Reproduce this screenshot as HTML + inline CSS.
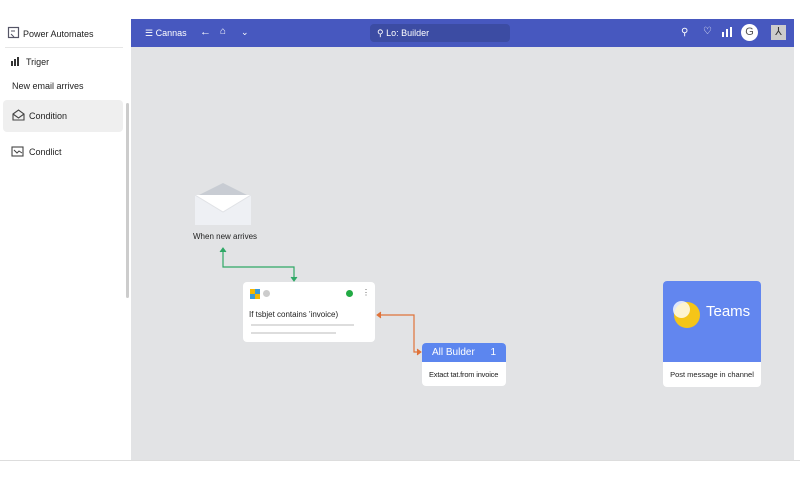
<!DOCTYPE html><html><head><style>
body{margin:0;width:800px;height:480px;background:#fff;position:relative;overflow:hidden;font-family:"Liberation Sans",sans-serif;color:#222}
.a{position:absolute}
.t{font-size:9px}
</style></head><body>
<div class="a" style="left:0;top:19px;width:131px;height:441px;background:#fff"></div>
<svg class="a" style="left:7px;top:26px" width="14" height="14"><rect x="1.5" y="1.5" width="10" height="10" fill="none" stroke="#556" stroke-width="1.2"/><path d="M4 5h4M4 8l3 3" stroke="#556"/></svg>
<div class="a t" style="left:23px;top:29px">Power Automates</div>
<div class="a" style="left:5px;top:47px;width:118px;height:1px;background:#e6e6e6"></div>
<svg class="a" style="left:11px;top:56px" width="10" height="10"><rect x="0" y="5" width="2" height="5" fill="#333"/><rect x="3" y="3" width="2" height="7" fill="#333"/><rect x="6" y="1" width="2" height="9" fill="#333"/></svg>
<div class="a t" style="left:26px;top:57px">Triger</div>
<div class="a t" style="left:12px;top:81px">New email arrives</div>
<div class="a" style="left:3px;top:100px;width:120px;height:32px;background:#efefef;border-radius:4px"></div>
<svg class="a" style="left:12px;top:109px" width="13" height="12"><path d="M1 5l5.5-4 5.5 4v6H1z M1 5l5.5 4 5.5-4" fill="none" stroke="#444" stroke-width="1.1"/></svg>
<div class="a t" style="left:29px;top:111px">Condition</div>
<svg class="a" style="left:11px;top:145px" width="13" height="12"><rect x="1" y="2" width="11" height="9" fill="none" stroke="#444" stroke-width="1.1"/><path d="M3 5l3 3 2-2 3 2" fill="none" stroke="#444"/></svg>
<div class="a t" style="left:29px;top:147px">Condlict</div>
<div class="a" style="left:126px;top:103px;width:3px;height:195px;background:#ccc;border-radius:2px"></div>

<div class="a" style="left:131px;top:19px;width:663px;height:28px;background:#4758bf"></div>
<div class="a" style="left:131px;top:47px;width:663px;height:413px;background:#e2e3e5"></div>
<div class="a" style="left:0;top:460px;width:800px;height:1px;background:#ddd"></div>
<div class="a" style="left:145px;top:28px;color:#fff;font-size:9px">☰ Cannas</div>
<div class="a" style="left:200px;top:26px;color:#fff;font-size:11px">←</div>
<div class="a" style="left:220px;top:26px;color:#fff;font-size:10px">⌂</div>
<div class="a" style="left:241px;top:27px;color:#fff;font-size:9px">⌄</div>
<div class="a" style="left:370px;top:24px;width:140px;height:18px;background:#3c4ca3;border-radius:4px"></div>
<div class="a" style="left:377px;top:28px;color:#fff;font-size:9px">⚲ Lo: Builder</div>
<div class="a" style="left:681px;top:27px;color:#fff;font-size:10px">⚲</div>
<div class="a" style="left:703px;top:26px;color:#fff;font-size:10px">♡</div>
<svg class="a" style="left:722px;top:27px" width="10" height="10"><rect x="0" y="5" width="2" height="5" fill="#fff"/><rect x="4" y="2" width="2" height="8" fill="#fff"/><rect x="8" y="0" width="2" height="10" fill="#fff"/></svg>
<div class="a" style="left:741px;top:24px;width:17px;height:17px;background:#fff;border-radius:50%;color:#555;font-size:11px;text-align:center;line-height:17px">G</div>
<div class="a" style="left:771px;top:25px;width:15px;height:15px;background:#ccc;color:#333;font-size:11px;text-align:center;line-height:15px">⅄</div>

<svg class="a" style="left:195px;top:183px" width="56" height="42"><path d="M0 14L28 0 56 14z" fill="#c8ccd3"/><rect x="0" y="12" width="56" height="30" fill="#eef0f4"/><path d="M0 12L28 29 56 12" fill="#fff" stroke="#e0e2e6"/></svg>
<div class="a" style="left:193px;top:232px;font-size:8px">When new arrives</div>
<svg class="a" style="left:0;top:0" width="800" height="480"><path d="M223 249V267H294V280" fill="none" stroke="#2fa866" stroke-width="1.2"/><path d="M220 252l3-4 3 4M291 277l3 4 3-4" fill="#2fa866" stroke="#2fa866"/><path d="M378 315H414V352H420" fill="none" stroke="#e0733a" stroke-width="1.2"/><path d="M381 312l-4 3 4 3M417 349l4 3-4 3" fill="#e0733a" stroke="#e0733a"/></svg>
<div class="a" style="left:243px;top:282px;width:132px;height:60px;background:#fff;border-radius:4px"></div>
<div class="a" style="left:250px;top:289px;width:5px;height:5px;background:#f2b705"></div><div class="a" style="left:255px;top:289px;width:5px;height:5px;background:#3c9ad6"></div><div class="a" style="left:250px;top:294px;width:5px;height:5px;background:#3c9ad6"></div><div class="a" style="left:255px;top:294px;width:5px;height:5px;background:#f2b705"></div>
<div class="a" style="left:263px;top:290px;width:7px;height:7px;background:#ccc;border-radius:50%"></div>
<div class="a" style="left:346px;top:290px;width:7px;height:7px;background:#22aa44;border-radius:50%"></div>
<div class="a" style="left:362px;top:288px;font-size:8px;color:#555">⋮</div>
<div class="a" style="left:249px;top:310px;font-size:8px">If tsbjet contains 'invoice)</div>
<div class="a" style="left:251px;top:324px;width:103px;height:2px;background:#ddd"></div>
<div class="a" style="left:251px;top:332px;width:85px;height:2px;background:#ddd"></div>
<div class="a" style="left:422px;top:343px;width:84px;height:43px;background:#fff;border-radius:4px;overflow:hidden"><div style="height:19px;background:#5c86ef;color:#fff;font-size:10px;line-height:19px;padding-left:10px">All Bulder<span style="float:right;margin-right:10px">1</span></div><div style="font-size:7.5px;padding:8px 0 0 7px;white-space:nowrap;letter-spacing:-0.2px">Extact tat.from invoice</div></div>
<div class="a" style="left:663px;top:281px;width:98px;height:106px;background:#fff;border-radius:4px;overflow:hidden"><div style="height:81px;background:#6286ef;position:relative"><div class="a" style="left:11px;top:21px;width:26px;height:26px;background:#f5c518;border-radius:50%"></div><div class="a" style="left:10px;top:20px;width:17px;height:17px;background:#fff;opacity:.8;border-radius:50%"></div><div class="a" style="left:43px;top:22px;color:#fff;font-size:15px">Teams</div></div><div style="font-size:7.5px;text-align:center;padding-top:8px;white-space:nowrap">Post message in channel</div></div>
</body></html>
